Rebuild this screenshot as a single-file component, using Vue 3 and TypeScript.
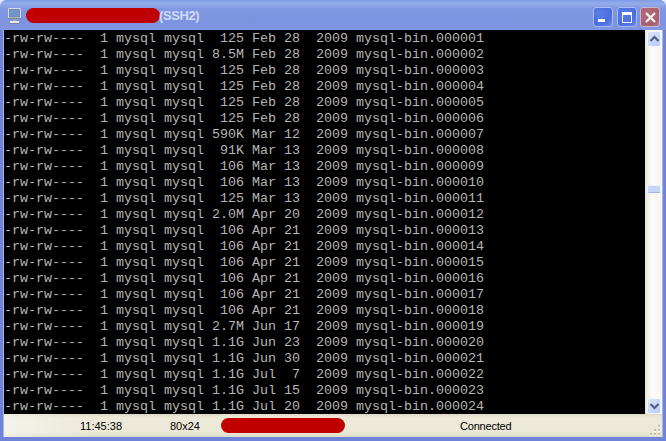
<script setup lang="ts">
interface Row { size: string; date: string }
const raw: [string, string][] = [
  ['125', 'Feb 28'], ['8.5M', 'Feb 28'], ['125', 'Feb 28'], ['125', 'Feb 28'], ['125', 'Feb 28'], ['125', 'Feb 28'],
  ['590K', 'Mar 12'], ['91K', 'Mar 13'], ['106', 'Mar 13'], ['106', 'Mar 13'], ['125', 'Mar 13'], ['2.0M', 'Apr 20'],
  ['106', 'Apr 21'], ['106', 'Apr 21'], ['106', 'Apr 21'], ['106', 'Apr 21'], ['106', 'Apr 21'], ['106', 'Apr 21'],
  ['2.7M', 'Jun 17'], ['1.1G', 'Jun 23'], ['1.1G', 'Jun 30'], ['1.1G', 'Jul  7'], ['1.1G', 'Jul 15'], ['1.1G', 'Jul 20']
]
const lines: string[] = raw.map(([size, date], i) => {
  const row: Row = { size, date }
  return `-rw-rw----  1 mysql mysql ${row.size.padStart(4, ' ')} ${row.date}  2009 mysql-bin.${String(i + 1).padStart(6, '0')}`
})
</script>

<template>
  <div class="window">
    <header class="titlebar">
      <svg class="appicon" width="16" height="16" viewBox="0 0 16 16">
        <rect x="1" y="0" width="13" height="11" rx="1" fill="#d4d8e0" />
        <rect x="1" y="10" width="13" height="1" fill="#7d8498" />
        <rect x="2.5" y="1.5" width="10" height="7.5" fill="#6f95cc" stroke="#5f7091" stroke-width="0.6" />
        <rect x="6" y="11" width="3" height="2" fill="#a0a6b4" />
        <rect x="3" y="13" width="9" height="2" fill="#e6e8ee" />
        <rect x="3" y="15" width="9" height="1" fill="#7d8498" />
      </svg>
      <span class="redact title-redact"></span>
      <span class="title">(SSH2)</span>
      <div class="controls">
        <div class="btn blue">
          <span class="min"></span>
        </div>
        <div class="btn blue">
          <span class="max"></span>
        </div>
        <div class="btn close">
          <svg width="13" height="13" viewBox="0 0 13 13">
            <path d="M2 2 L11 11 M11 2 L2 11" stroke="#f6ecec" stroke-width="2.4" />
          </svg>
        </div>
      </div>
    </header>
    <div class="body">
      <main class="terminal">
        <div v-for="line in lines" :key="line" class="line">{{ line }}</div>
      </main>
      <aside class="scrollbar">
        <div class="arrow up">
          <svg width="11" height="8" viewBox="0 0 11 8">
            <path d="M1.5 6 L5.5 2 L9.5 6" fill="none" stroke="#4d6185" stroke-width="2.2" />
          </svg>
        </div>
        <div class="track">
          <div class="thumb"></div>
        </div>
        <div class="arrow">
          <svg width="11" height="8" viewBox="0 0 11 8">
            <path d="M1.5 2 L5.5 6 L9.5 2" fill="none" stroke="#4d6185" stroke-width="2.2" />
          </svg>
        </div>
      </aside>
    </div>
    <footer class="status">
      <span class="cell time">11:45:38</span>
      <span class="cell size">80x24</span>
      <span class="cell host"><span class="redact status-redact"></span></span>
      <span class="cell conn">Connected</span>
      <svg class="grip" width="12" height="12" viewBox="0 0 12 12">
        <g fill="#fbfaf2">
          <rect x="9" y="2" width="2" height="2" /><rect x="5" y="6" width="2" height="2" />
          <rect x="9" y="6" width="2" height="2" /><rect x="1" y="10" width="2" height="2" />
          <rect x="5" y="10" width="2" height="2" /><rect x="9" y="10" width="2" height="2" />
        </g>
        <g fill="#c4c1ae">
          <rect x="9" y="1" width="2" height="2" /><rect x="5" y="5" width="2" height="2" />
          <rect x="9" y="5" width="2" height="2" /><rect x="1" y="9" width="2" height="2" />
          <rect x="5" y="9" width="2" height="2" /><rect x="9" y="9" width="2" height="2" />
        </g>
      </svg>
    </footer>
  </div>
</template>

<style>
html, body { margin: 0; padding: 0; background: #dfe6f6; overflow: hidden; }
</style>

<style scoped>
.window {
  width: 666px;
  height: 441px;
  box-sizing: border-box;
  display: flex;
  flex-direction: column;
  background: #6f84d9;
  padding: 0 4px 4px;
  border-radius: 7px 7px 0 0;
  overflow: hidden;
}
.titlebar {
  height: 30px;
  flex: none;
  margin: 0 -4px;
  padding: 0 6px 0 7px;
  box-sizing: border-box;
  display: flex;
  align-items: center;
  background: linear-gradient(180deg, #7d9be6 0%, #95ace9 12%, #8199e3 28%, #7b93e0 70%, #7f97e2 100%);
  font: 700 13px "Liberation Sans", Arial, sans-serif;
}
.appicon { flex: none; margin-right: 3px; margin-top: 1px; }
.redact { display: block; background: #c00000; }
.title-redact { width: 134px; height: 15px; border-radius: 8px; margin-top: 1px; }
.title { color: #d0dbf7; margin-left: -1px; margin-top: 1px; letter-spacing: -0.4px; }
.controls { margin-left: auto; display: flex; gap: 3.5px; margin-top: 4px; }
.btn {
  width: 20px;
  height: 20px;
  box-sizing: border-box;
  border: 1px solid #a9bbf0;
  border-radius: 3px;
  position: relative;
  display: flex;
  align-items: center;
  justify-content: center;
}
.blue { background: radial-gradient(circle at 30% 30%, #5b7ee6, #4a6fde 60%, #6c8ce6 100%); }
.close { background: radial-gradient(circle at 30% 30%, #b26a78, #a85f72 70%, #b87a8c 100%); border-color: #c9b6cf; }
.min { position: absolute; left: 4px; top: 11px; width: 7px; height: 3px; background: #fff; }
.max { width: 8px; height: 7px; border: 1px solid #fff; border-top-width: 3px; }
.body { flex: 1; display: flex; min-height: 0; box-shadow: -1px 0 0 #a9b7ea, 1px 0 0 #a9b7ea; }
.terminal {
  flex: 1;
  min-width: 0;
  background: #000;
  color: #b6b6b6;
  font: 13.33px/16px "Liberation Mono", "Courier New", monospace;
  white-space: pre;
  overflow: hidden;
  padding-top: 1px;
}
.line { height: 16px; }
.scrollbar {
  width: 17px;
  flex: none;
  display: flex;
  flex-direction: column;
  background: linear-gradient(90deg, #e9e7da, #fbfbf8 40%, #f7f6f0);
}
.arrow {
  height: 16px;
  width: 14px;
  margin-left: 2px;
  flex: none;
  box-sizing: border-box;
  border: 1px solid #f3f6fd;
  border-radius: 2px;
  background: linear-gradient(135deg, #dbe6fd, #b9cbf6);
  display: flex;
  align-items: center;
  justify-content: center;
}
.up { margin-top: 1px; }
.track { flex: 1; position: relative; }
.thumb {
  position: absolute;
  left: 2px;
  width: 14px;
  top: 138px;
  height: 8px;
  box-sizing: border-box;
  background: #c6d6fb;
  border: 1px solid #eef2fd;
  border-bottom-color: #9db6ee;
  border-radius: 2px;
}
.status {
  height: 23px;
  flex: none;
  position: relative;
  display: grid;
  grid-template-columns: 166px 51px 239px 1fr;
  align-items: center;
  background:
    linear-gradient(90deg, rgba(255, 255, 255, 0.45), rgba(255, 255, 255, 0) 90px),
    linear-gradient(180deg, #dcd9c6 0%, #ece9d8 14%, #ece9d8 78%, #dedbc8 100%);
  color: #000;
  font: 11px "Liberation Sans", Tahoma, Arial, sans-serif;
  box-shadow: -1px 0 0 #a9b7ea, 1px 0 0 #a9b7ea;
}
.cell { display: block; white-space: nowrap; }
.time { padding-left: 76px; }
.host { display: flex; }
.conn { letter-spacing: -0.2px; }
.status-redact { width: 124px; height: 15px; border-radius: 8px; }
.grip { position: absolute; right: 1px; bottom: 1px; }
</style>
